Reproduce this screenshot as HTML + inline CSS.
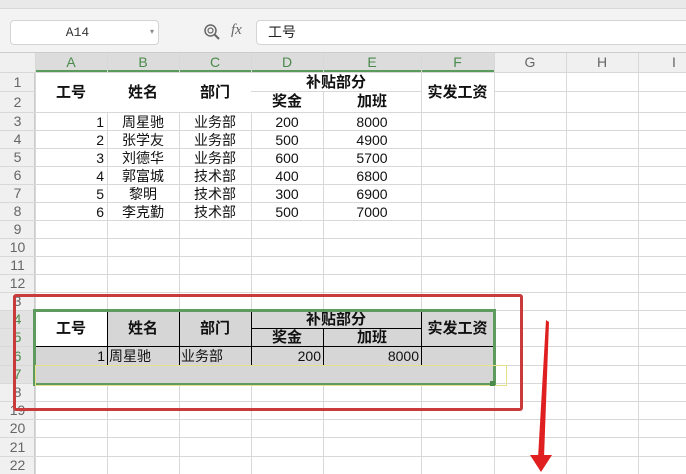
<!DOCTYPE html>
<html><head><meta charset="utf-8"><style>
body{margin:0;width:686px;height:474px;overflow:hidden;background:#fff;position:relative;font-family:"Liberation Sans","Noto Sans CJK SC",sans-serif}
div{position:absolute;box-sizing:border-box}
.h{left:0;width:686px;height:1px;background:#d8d8d8}
.v{top:53px;height:421px;width:1px;background:#d8d8d8}
.rn{left:0;width:35px;font-size:14px;color:#666;text-align:center;line-height:18px}
.ch{top:53px;height:19px;font-size:14px;color:#666;text-align:center;line-height:19px}
.t{font-size:14px;color:#111;text-align:center;line-height:18px;white-space:nowrap}
.b{font-weight:bold;font-size:15px}
.r{text-align:right}
</style></head><body>
<div style="left:0;top:0;width:686px;height:9px;background:#e9e9e9;border-bottom:1px solid #d8d8d8"></div>
<div style="left:0;top:9px;width:686px;height:44px;background:#f3f3f3;border-bottom:1px solid #ccc"></div>
<div style="left:10px;top:20px;width:149px;height:25px;background:#fff;border:1px solid #d4d4d4;border-radius:4px;font-family:'Liberation Mono',monospace;font-size:13px;line-height:23px;text-align:center;padding-right:14px;color:#333">A14</div>
<div style="left:150px;top:27px;font-size:8px;color:#888">▾</div>
<svg style="position:absolute;left:203px;top:23px" width="18" height="18"><circle cx="7.5" cy="7.5" r="5.5" fill="none" stroke="#666" stroke-width="1.5"/><circle cx="7.5" cy="7.5" r="2.5" fill="none" stroke="#666" stroke-width="1.2"/><path d="M11.5 11.5 L16 16" stroke="#666" stroke-width="2"/></svg>
<div style="left:231px;top:22px;font-size:15px;font-style:italic;color:#666;font-family:'Liberation Serif',serif">fx</div>
<div style="left:256px;top:20px;width:432px;height:25px;background:#fff;border:1px solid #d4d4d4;border-radius:4px 0 0 4px;font-size:14px;line-height:23px;padding-left:11px;color:#222">工号</div>
<div style="left:0;top:53px;width:686px;height:19px;background:#f0f0f0"></div>
<div style="left:35px;top:53px;width:459px;height:19px;background:#dcdcdc;border-bottom:2px solid #5a9a5a"></div>
<div style="left:0;top:72px;width:35px;height:402px;background:#f0f0f0;border-right:1px solid #ccc"></div>
<div style="left:0;top:310px;width:35px;height:73px;background:#e2e2e2"></div>
<div class="h" style="top:72px"></div><div class="h" style="top:91px;left:0;width:251px"></div><div class="h" style="top:91px;left:494px;width:192px"></div><div class="h" style="top:112px"></div><div class="h" style="top:130px"></div><div class="h" style="top:148px"></div><div class="h" style="top:166px"></div><div class="h" style="top:184px"></div><div class="h" style="top:202px"></div><div class="h" style="top:220px"></div><div class="h" style="top:238px"></div><div class="h" style="top:256px"></div><div class="h" style="top:274px"></div><div class="h" style="top:292px"></div><div class="h" style="top:310px"></div><div class="h" style="top:328px"></div><div class="h" style="top:346px"></div><div class="h" style="top:365px"></div><div class="h" style="top:383px"></div><div class="h" style="top:401px"></div><div class="h" style="top:419px"></div><div class="h" style="top:437px"></div><div class="h" style="top:456px"></div>
<div class="h" style="top:91px;left:251px;width:170px;background:#e4e4e4"></div>
<div class="v" style="left:35px"></div><div class="v" style="left:107px"></div><div class="v" style="left:179px"></div><div class="v" style="left:251px"></div><div class="v" style="left:323px;top:91px;height:383px"></div><div class="v" style="left:323px;top:53px;height:19px"></div><div class="v" style="left:421px"></div><div class="v" style="left:494px"></div><div class="v" style="left:566px"></div><div class="v" style="left:638px"></div>
<div class="ch" style="left:35px;width:72px;color:#4a8a4a">A</div><div class="ch" style="left:107px;width:72px;color:#4a8a4a">B</div><div class="ch" style="left:179px;width:72px;color:#4a8a4a">C</div><div class="ch" style="left:251px;width:72px;color:#4a8a4a">D</div><div class="ch" style="left:323px;width:98px;color:#4a8a4a">E</div><div class="ch" style="left:421px;width:73px;color:#4a8a4a">F</div><div class="ch" style="left:494px;width:72px">G</div><div class="ch" style="left:566px;width:72px">H</div><div class="ch" style="left:638px;width:72px">I</div>
<div class="rn" style="top:73px">1</div><div class="rn" style="top:93px">2</div><div class="rn" style="top:112px">3</div><div class="rn" style="top:130px">4</div><div class="rn" style="top:148px">5</div><div class="rn" style="top:166px">6</div><div class="rn" style="top:184px">7</div><div class="rn" style="top:202px">8</div><div class="rn" style="top:220px">9</div><div class="rn" style="top:238px">10</div><div class="rn" style="top:256px">11</div><div class="rn" style="top:274px">12</div>
<div class="rn" style="top:292px">3</div><div class="rn" style="top:310px;color:#4a8a4a">4</div><div class="rn" style="top:328px;color:#4a8a4a">5</div><div class="rn" style="top:347px;color:#4a8a4a">6</div><div class="rn" style="top:365px;color:#4a8a4a">7</div><div class="rn" style="top:383px">8</div><div class="rn" style="top:401px">19</div><div class="rn" style="top:419px">20</div><div class="rn" style="top:438px">21</div><div class="rn" style="top:456px">22</div>
<div style="left:36px;top:73px;width:458px;height:39px;background:#fff"></div>
<div class="t b" style="left:35px;top:84px;width:72px">工号</div>
<div class="t b" style="left:107px;top:84px;width:72px">姓名</div>
<div class="t b" style="left:179px;top:84px;width:72px">部门</div>
<div class="t b" style="left:251px;top:74px;width:170px">补贴部分</div>
<div style="left:251px;top:91px;width:170px;height:1px;background:#d8d8d8"></div>
<div style="left:323px;top:91px;width:1px;height:21px;background:#d8d8d8"></div>
<div class="t b" style="left:251px;top:93px;width:72px">奖金</div>
<div class="t b" style="left:323px;top:93px;width:98px">加班</div>
<div class="t b" style="left:421px;top:84px;width:73px">实发工资</div>
<div style="left:421px;top:72px;width:1px;height:40px;background:#d8d8d8"></div>
<div class="t r" style="left:35px;top:113px;width:69px">1<br>2<br>3<br>4<br>5<br>6</div>
<div class="t" style="left:107px;top:113px;width:72px">周星驰<br>张学友<br>刘德华<br>郭富城<br>黎明<br>李克勤</div>
<div class="t" style="left:179px;top:113px;width:72px">业务部<br>业务部<br>业务部<br>技术部<br>技术部<br>技术部</div>
<div class="t" style="left:251px;top:113px;width:72px">200<br>500<br>600<br>400<br>300<br>500</div>
<div class="t" style="left:323px;top:113px;width:98px">8000<br>4900<br>5700<br>6800<br>6900<br>7000</div>
<div style="left:35px;top:310px;width:459px;height:73px;background:#d6d6d6"></div>
<div style="left:35px;top:310px;width:72px;height:37px;background:#fff"></div>
<div style="left:35px;top:346px;width:459px;height:1px;background:#000"></div>
<div style="left:35px;top:365px;width:459px;height:1px;background:#000"></div>
<div style="left:251px;top:328px;width:170px;height:1px;background:#000"></div>
<div style="left:107px;top:310px;width:1px;height:55px;background:#000"></div>
<div style="left:179px;top:310px;width:1px;height:55px;background:#000"></div>
<div style="left:251px;top:310px;width:1px;height:55px;background:#000"></div>
<div style="left:323px;top:328px;width:1px;height:37px;background:#000"></div>
<div style="left:421px;top:310px;width:1px;height:55px;background:#000"></div>
<div class="t b" style="left:35px;top:320px;width:72px">工号</div>
<div class="t b" style="left:107px;top:320px;width:72px">姓名</div>
<div class="t b" style="left:179px;top:320px;width:72px">部门</div>
<div class="t b" style="left:251px;top:311px;width:170px">补贴部分</div>
<div class="t b" style="left:251px;top:329px;width:72px">奖金</div>
<div class="t b" style="left:323px;top:329px;width:98px">加班</div>
<div class="t b" style="left:421px;top:320px;width:73px">实发工资</div>
<div class="t r" style="left:35px;top:347px;width:70px">1</div>
<div class="t" style="left:109px;top:347px;text-align:left">周星驰</div>
<div class="t" style="left:181px;top:347px;text-align:left">业务部</div>
<div class="t r" style="left:251px;top:347px;width:70px">200</div>
<div class="t r" style="left:323px;top:347px;width:96px">8000</div>
<div style="left:33px;top:309px;width:463px;height:77px;border:3px solid #5f9a5f"></div>
<div style="left:35px;top:365px;width:472px;height:21px;border:1px solid #e6e08a"></div>
<div style="left:490px;top:381px;width:5px;height:5px;background:#4a8a4a"></div>
<div style="left:13px;top:294px;width:510px;height:117px;border:3px solid #c93a3c;border-radius:3px"></div>
<svg style="position:absolute;left:0;top:0" width="686" height="474"><path d="M546 320 L549 322 L544 458 L538 458 Z" fill="#e02020"/><path d="M530 455 L552 455 L541 472 Z" fill="#e02020"/></svg>
</body></html>
